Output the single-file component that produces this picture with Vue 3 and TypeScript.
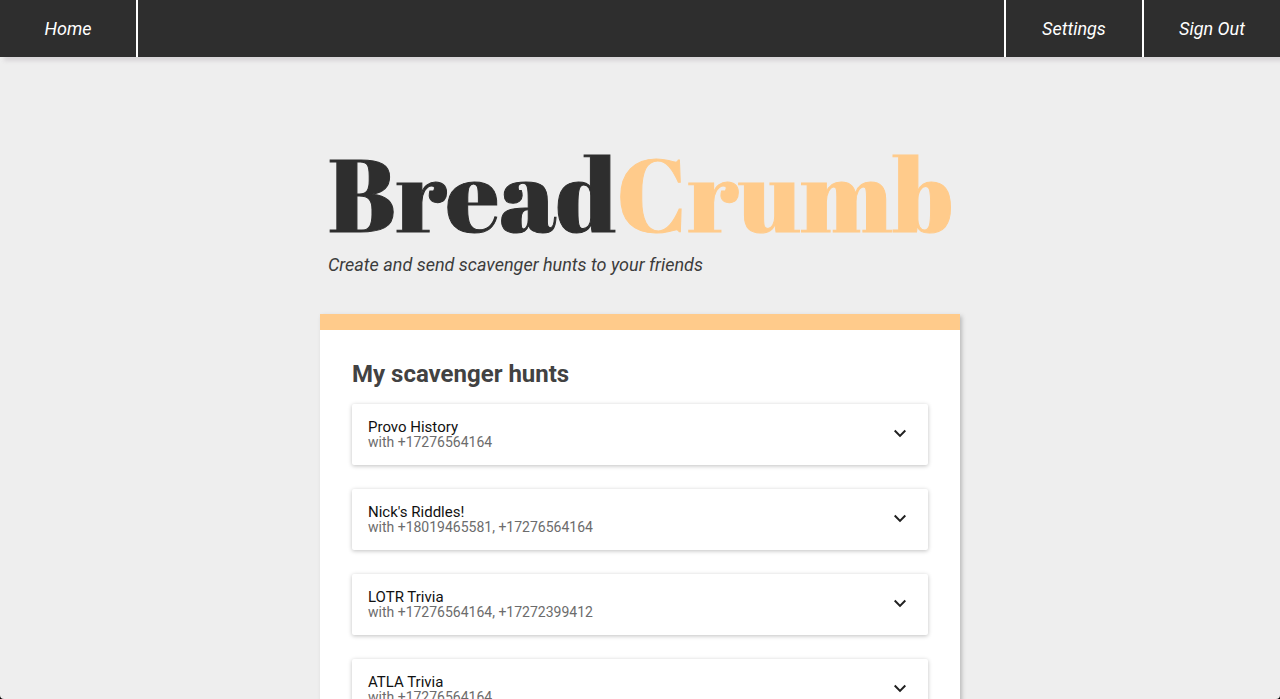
<script setup lang="ts">
import { ref } from 'vue'

interface Hunt {
  name: string
  numbers: string[]
}

const hunts: Hunt[] = [
  { name: 'Provo History', numbers: ['+17276564164'] },
  { name: "Nick's Riddles!", numbers: ['+18019465581', '+17276564164'] },
  { name: 'LOTR Trivia', numbers: ['+17276564164', '+17272399412'] },
  { name: 'ATLA Trivia', numbers: ['+17276564164'] },
]

const opened = ref<number | null>(null)

function toggle(index: number): void {
  opened.value = opened.value === index ? null : index
}
</script>

<template>
  <div class="page">
    <nav class="bar">
      <a class="tab tab-left" href="#home">Home</a>
      <a class="tab tab-right" href="#settings">Settings</a>
      <a class="tab tab-right" href="#signout">Sign Out</a>
    </nav>
    <main class="content">
      <header class="brand">
        <h1 class="logo">Bread<span class="accent">Crumb</span></h1>
        <p class="tagline">Create and send scavenger hunts to your friends</p>
      </header>
      <section class="panel">
        <h2 class="heading">My scavenger hunts</h2>
        <ul class="hunts">
          <li v-for="(hunt, index) in hunts" :key="hunt.name">
            <button
              class="hunt"
              type="button"
              :aria-expanded="opened === index"
              @click="toggle(index)"
            >
              <span class="info">
                <span class="name">{{ hunt.name }}</span>
                <span class="with">with {{ hunt.numbers.join(', ') }}</span>
              </span>
              <svg
                class="chevron"
                :class="{ open: opened === index }"
                viewBox="0 0 24 24"
                aria-hidden="true"
              >
                <path d="M7.41 7.84L12 12.42l4.59-4.58L18 9.25l-6 6-6-6z" />
              </svg>
            </button>
          </li>
        </ul>
      </section>
    </main>
  </div>
</template>

<style>
html {
  background: #000;
}
</style>

<style scoped>
.page {
  box-sizing: border-box;
  height: 100vh;
  overflow-y: auto;
  scrollbar-width: none;
  background: #eee;
  border-radius: 0 0 4px 4px;
  font-family: Roboto, sans-serif;
}

.bar {
  display: flex;
  height: 57px;
  background: #2e2e2e;
  box-shadow: 4px 4px 4px #d8d6d8;
}

.tab {
  display: flex;
  align-items: center;
  justify-content: center;
  width: 136px;
  color: #fff;
  font-size: 18px;
  font-style: italic;
  text-decoration: none;
}

.tab-left {
  margin-right: auto;
  border-right: 2px solid #fff;
}

.tab-right {
  border-left: 2px solid #fff;
}

.content {
  max-width: 640px;
  margin: 0 auto;
  padding: 80px 0 32px;
}

.brand {
  padding: 0 8px;
}

.logo {
  margin: 0 0 4px;
  color: #2e2e2e;
  font-family: "Abril Fatface", "Liberation Serif", serif;
  font-size: 103px;
  font-weight: 400;
  line-height: 112px;
  white-space: nowrap;
  -webkit-text-stroke: 1px currentColor;
}

.accent {
  color: #ffcb8b;
}

.tagline {
  margin: 0;
  color: #3c3c3c;
  font-size: 18px;
  font-style: italic;
  line-height: 24px;
}

.panel {
  margin-top: 37px;
  padding: 28px 32px 32px;
  background: #fff;
  border-top: 16px solid #ffcb8b;
  box-shadow: 2px 2px 4px #bbb;
}

.heading {
  margin: 0 0 14px;
  color: #424242;
  font-size: 24px;
  font-weight: 700;
  line-height: 32px;
}

.hunts {
  display: flex;
  flex-direction: column;
  gap: 24px;
  margin: 0;
  padding: 0;
  list-style: none;
}

.hunt {
  display: flex;
  align-items: flex-start;
  justify-content: space-between;
  width: 100%;
  padding: 15px 16px;
  border: 0;
  border-radius: 2px;
  background: #fff;
  box-shadow: 0 1px 4px rgba(0, 0, 0, 0.25);
  font-family: inherit;
  text-align: left;
  cursor: pointer;
}

.info {
  display: flex;
  flex-direction: column;
}

.name {
  color: #111;
  font-size: 15px;
  line-height: 16px;
}

.with {
  color: #6c6c6c;
  font-size: 14px;
  line-height: 15px;
}

.chevron {
  width: 24px;
  height: 24px;
  margin-top: 3px;
  fill: #212121;
}

.chevron.open {
  transform: rotate(180deg);
}
</style>
